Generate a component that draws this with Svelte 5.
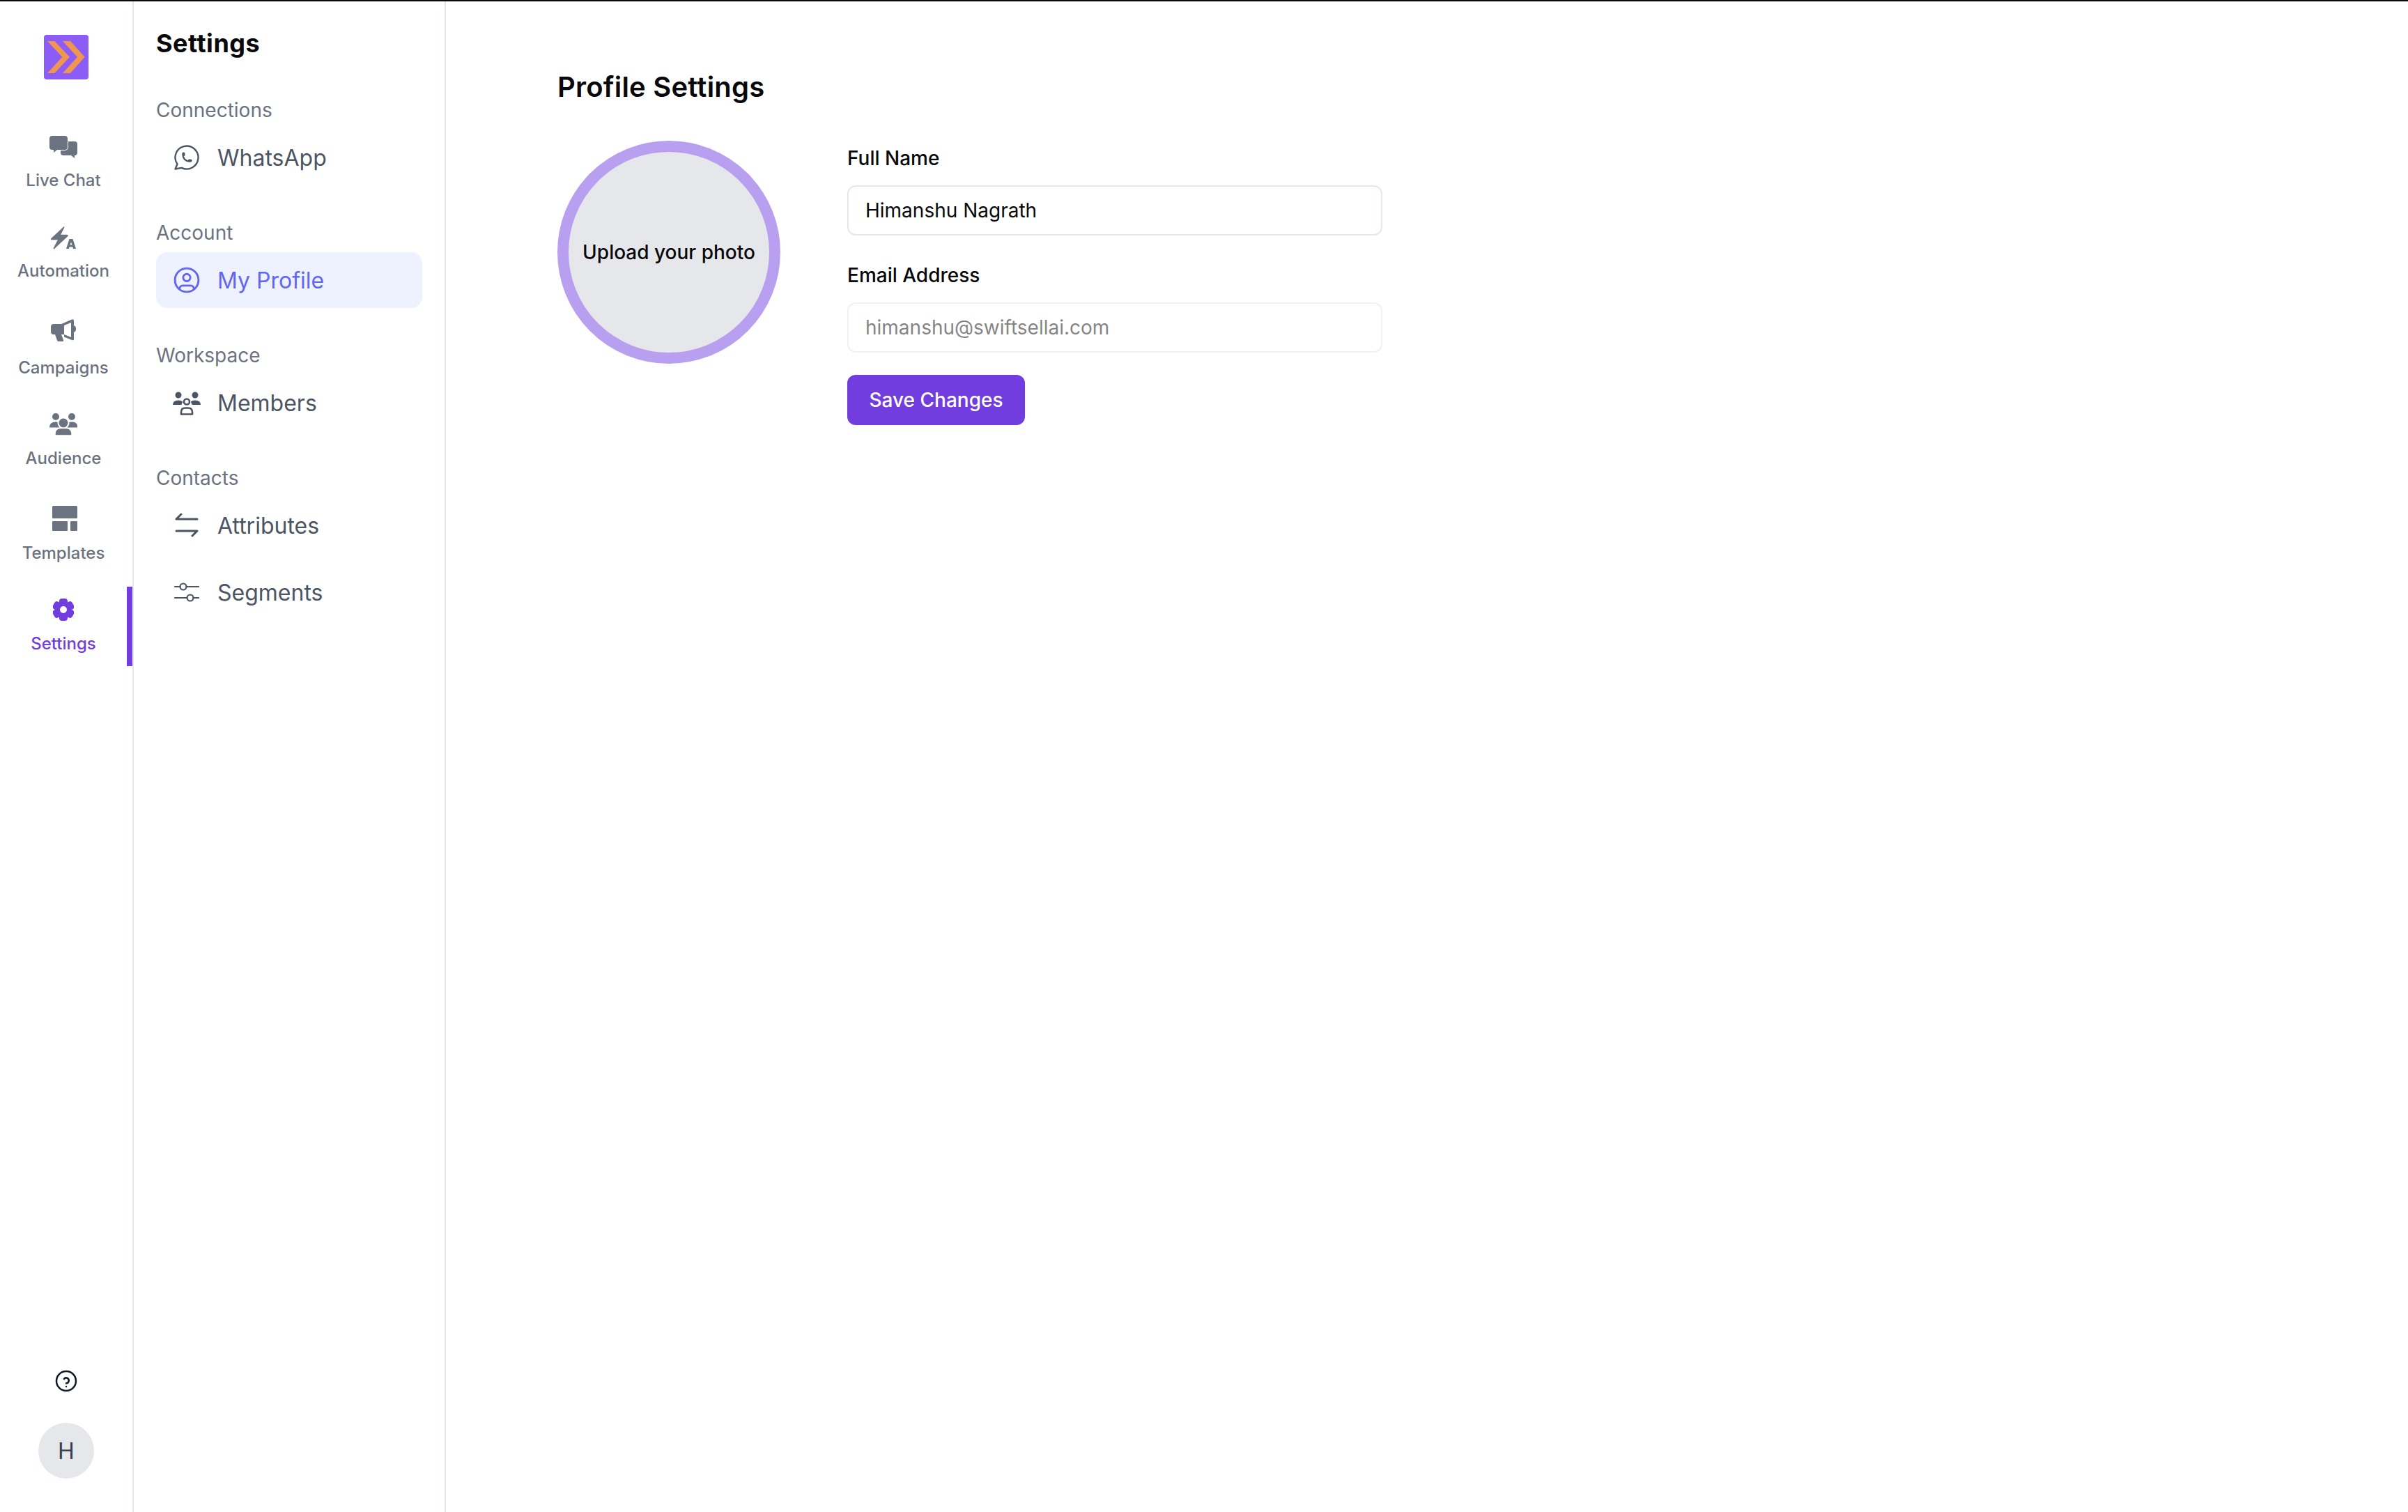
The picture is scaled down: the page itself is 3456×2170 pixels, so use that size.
<script>
  let fullName = $state("Himanshu Nagrath");
  const email = "himanshu@swiftsellai.com";
</script>

<div class="app">
  <!-- icon rail -->
  <aside class="rail">
    <div class="rail-top">
      <svg class="logo" width="64" height="64" viewBox="0 0 64 64">
        <rect width="64" height="64" rx="4" fill="#8b5cf6" />
        <polygon points="5,9 15.3,9 37,31.7 15.3,55 5,55 26.3,31.7" fill="#f09651" />
        <polygon points="27,9 38,9 58.7,31.7 38,55 27,55 48,31.7" fill="#f09651" />
      </svg>

      <nav class="rail-nav">
        <a class="rail-item chat">
          <svg width="40" height="32" viewBox="0 0 40 32">
            <path d="M20 8h16a4 4 0 0 1 4 4v12a4 4 0 0 1-4 4v4l-5-4H20a4 4 0 0 1-4-4V12a4 4 0 0 1 4-4z" fill="currentColor" />
            <path d="M4 0h18a4 4 0 0 1 4 4v12a4 4 0 0 1-4 4H11l-5 4v-4H4a4 4 0 0 1-4-4V4a4 4 0 0 1 4-4z" fill="currentColor" stroke="#fff" stroke-width="2" paint-order="stroke" />
          </svg>
          <span>Live Chat</span>
        </a>
        <a class="rail-item automation">
          <svg width="36" height="33" viewBox="0 0 36 33">
            <path d="M18.7 1 .8 17.8q-.6.8.5.8H11L4.3 31.7 23.7 13.6q.6-1-.6-1H13z" fill="currentColor" stroke="currentColor" stroke-width="1.500" stroke-linejoin="round" />
            <path fill-rule="evenodd" d="M26.5 18h5L36 32h-4l-.7-2.400h-4.800L25.800 32H22zm2.500 4.400-1.500 4.200h3z" fill="currentColor" />
          </svg>
          <span>Automation</span>
        </a>
        <a class="rail-item campaigns">
          <svg width="36" height="32" viewBox="0 0 36 32">
            <path fill-rule="evenodd" d="M4 7h11L30 .6q3-1 3 2V9q3 1 3 5t-3 5v9.500q0 2.500-3 1.600L19 25.500V22l10 4V5l-10 4v13h-4l3 8q.5 2-1.500 2H11q-1.500 0-2-1.500L6 22H4q-4 0-4-4v-7q0-4 4-4z" fill="currentColor" />
          </svg>
          <span>Campaigns</span>
        </a>
        <a class="rail-item">
          <svg width="40" height="32" viewBox="0 0 40 32">
            <circle cx="9" cy="5" r="5" fill="currentColor" />
            <circle cx="32" cy="5" r="5" fill="currentColor" />
            <path d="M0 20.500q0-8 9-8t9 8z" fill="currentColor" />
            <path d="M22 20.500q0-8 9.500-8t8.500 8z" fill="currentColor" />
            <circle cx="20" cy="14" r="7.500" fill="currentColor" stroke="#fff" stroke-width="2" />
            <path d="M8 32v-3q0-6.500 7-7.500h10q7 1 7 7.500v3z" fill="currentColor" stroke="#fff" stroke-width="1.500" />
          </svg>
          <span>Audience</span>
        </a>
        <a class="rail-item templates">
          <svg width="36" height="36" viewBox="0 0 36 36">
            <rect width="36" height="18" rx="1.500" fill="currentColor" />
            <rect y="22" width="22" height="14" rx="1" fill="currentColor" />
            <rect x="26" y="22" width="10" height="14" rx="1" fill="currentColor" />
          </svg>
          <span>Templates</span>
        </a>
        <a class="rail-item active">
          <svg width="30" height="32" viewBox="0 0 30 32">
            <g fill="currentColor">
              <rect x="9" y="0" width="12" height="32" rx="4" />
              <rect x="9" y="0" width="12" height="32" rx="4" transform="rotate(60 15 16)" />
              <rect x="9" y="0" width="12" height="32" rx="4" transform="rotate(120 15 16)" />
              <circle cx="15" cy="16" r="12" />
            </g>
            <circle cx="15" cy="16" r="5" fill="#fff" />
          </svg>
          <span>Settings</span>
        </a>
      </nav>
    </div>

    <div class="rail-bottom">
      <svg width="32" height="32" viewBox="0 0 24 24" fill="none" stroke="#111827" stroke-width="1.900" stroke-linecap="round" stroke-linejoin="round">
        <circle cx="12" cy="12" r="10.500" />
        <path d="M12 18v.01" />
        <path d="M12 14.500a3 3 0 0 0 1.300-5.600 3 3 0 0 0-3.600.800" />
      </svg>
      <div class="avatar">H</div>
    </div>
  </aside>

  <!-- settings menu -->
  <aside class="menu">
    <h2>Settings</h2>

    <section>
      <h3>Connections</h3>
      <a class="menu-item">
        <svg class="menu-icon" viewBox="0 0 24 24" stroke-width="1.300">
          <path d="M3 21l1.650-3.800a9 9 0 1 1 3.400 2.900l-5.050.9" />
          <path d="M9 10a.5.5 0 0 0 1 0V9a.5.5 0 0 0-1 0v1a5 5 0 0 0 5 5h1a.5.5 0 0 0 0-1h-1a.5.5 0 0 0 0 1" />
        </svg>
        WhatsApp
      </a>
    </section>

    <section>
      <h3>Account</h3>
      <a class="menu-item selected">
        <svg class="menu-icon" viewBox="0 0 24 24" stroke-width="1.600">
          <circle cx="12" cy="12" r="9.200" />
          <circle cx="12" cy="10" r="2.800" />
          <path d="M6.400 19v-.5a2.500 2.500 0 0 1 2.500-2.200h6.200a2.500 2.500 0 0 1 2.500 2.200v.5" />
        </svg>
        My Profile
      </a>
    </section>

    <section>
      <h3>Workspace</h3>
      <a class="menu-item">
        <svg class="menu-icon" viewBox="0 0 44 44">
          <g fill="currentColor" stroke="none">
            <circle cx="10" cy="11" r="4.500" />
            <circle cx="34" cy="11" r="4.500" />
            <path d="M2 25q0-6.500 8-6.500 4 0 6 2v1q-1.500 1.500-1.500 3.500z" />
            <path d="M42 25q0-6.500-8-6.500-4 0-6 2v1q1.500 1.500 1.500 3.500z" />
          </g>
          <g stroke-width="2.600">
            <circle cx="22" cy="20.500" r="4" />
            <path d="M14 38.500v-3q0-6 6-6h4q6 0 6 6v3z" />
          </g>
        </svg>
        Members
      </a>
    </section>

    <section>
      <h3>Contacts</h3>
      <a class="menu-item">
        <svg class="menu-icon" viewBox="0 0 44 44" stroke-width="3">
          <path d="M7 13h30M7 13l7-7" />
          <path d="M7 30h30M37 30l-7 7" />
        </svg>
        Attributes
      </a>
      <a class="menu-item">
        <svg class="menu-icon" viewBox="0 0 44 44" stroke-width="2.200">
          <circle cx="17" cy="14" r="4.500" />
          <path d="M5 14h7.500M21.500 14H39" />
          <circle cx="27" cy="30" r="4.500" />
          <path d="M5 30h17.500M31.500 30H39" />
        </svg>
        Segments
      </a>
    </section>
  </aside>

  <!-- profile form -->
  <main class="content">
    <h1>Profile Settings</h1>
    <div class="profile">
      <div class="photo">Upload your photo</div>
      <form class="form" onsubmit={(e) => e.preventDefault()}>
        <label for="full-name">Full Name</label>
        <input id="full-name" type="text" bind:value={fullName} />
        <label class="email-label" for="email">Email Address</label>
        <input id="email" type="text" value={email} disabled />
        <button type="submit">Save Changes</button>
      </form>
    </div>
  </main>
</div>

<style>
  :global(body) {
    margin: 0;
    background: #fff;
  }
  .app {
    display: flex;
    height: 2170px;
    box-sizing: border-box;
    border-top: 2px solid #09090b;
    font-family: Inter, "Liberation Sans", sans-serif;
    color: #09090b;
  }
  .rail {
    flex: none;
    width: 192px;
    box-sizing: border-box;
    border-right: 2px solid #e5e7eb;
    padding-top: 48px;
    display: flex;
    flex-direction: column;
    justify-content: space-between;
  }
  .logo {
    display: block;
    margin: 0 0 64px 63px;
  }
  .rail-nav {
    display: flex;
    flex-direction: column;
    gap: 16px;
  }
  .rail-item {
    display: flex;
    flex-direction: column;
    align-items: center;
    gap: 17px;
    padding: 17px 0 16px;
    border-right: 8px solid transparent;
    color: #6b7280;
    font-size: 24px;
    line-height: 32px;
    font-weight: 500;
  }
  .rail-item svg {
    display: block;
  }
  .rail-item.chat {
    gap: 16px;
    padding-bottom: 17px;
  }
  .rail-item.automation {
    gap: 15px;
  }
  .rail-item.campaigns {
    margin-top: 4px;
    gap: 22px;
  }
  .rail-item.templates {
    margin-top: 3px;
    gap: 16px;
  }
  .rail-item.templates svg {
    margin-left: 4px;
  }
  .rail-item.active {
    color: #723ddf;
    border-right-color: #723ddf;
  }
  .rail-bottom {
    display: flex;
    flex-direction: column;
    align-items: center;
    gap: 44px;
    padding-bottom: 48px;
  }
  .rail-bottom svg {
    display: block;
  }
  .avatar {
    width: 80px;
    height: 80px;
    border-radius: 50%;
    background: #e5e7eb;
    color: #374151;
    font-size: 32px;
    display: flex;
    align-items: center;
    justify-content: center;
  }
  .menu {
    flex: none;
    width: 448px;
    box-sizing: border-box;
    border-right: 2px solid #e5e7eb;
    padding: 32px 32px 0;
  }
  h2 {
    margin: 0 0 48px;
    font-size: 36px;
    line-height: 56px;
    font-weight: 700;
    letter-spacing: 0.5px;
  }
  section {
    margin-bottom: 48px;
  }
  h3 {
    margin: 0 0 8px;
    font-size: 28px;
    line-height: 40px;
    font-weight: 400;
    color: #6b7280;
  }
  .menu-item {
    display: flex;
    align-items: center;
    gap: 22px;
    height: 80px;
    padding: 0 22px;
    border-radius: 16px;
    font-size: 32px;
    color: #4b5563;
  }
  .menu-item + .menu-item {
    margin-top: 16px;
  }
  .menu-item.selected {
    background: #eef2ff;
    color: #6366f1;
  }
  .menu-icon {
    flex: none;
    width: 44px;
    height: 44px;
    fill: none;
    stroke: currentColor;
    stroke-linecap: round;
    stroke-linejoin: round;
  }
  .content {
    flex: 1;
    padding: 95px 0 0 160px;
  }
  h1 {
    margin: 0 0 49px;
    font-size: 40px;
    line-height: 56px;
    font-weight: 600;
    letter-spacing: 0.2px;
  }
  .profile {
    display: flex;
    gap: 96px;
    align-items: flex-start;
  }
  .photo {
    flex: none;
    width: 320px;
    height: 320px;
    box-sizing: border-box;
    border: 16px solid #b99ff0;
    border-radius: 50%;
    background: #e5e7eb;
    display: flex;
    align-items: center;
    justify-content: center;
    font-size: 28px;
    font-weight: 500;
    white-space: nowrap;
  }
  .form {
    width: 768px;
    padding-top: 5px;
    display: flex;
    flex-direction: column;
    align-items: flex-start;
  }
  label {
    font-size: 28px;
    line-height: 40px;
    font-weight: 500;
    margin-bottom: 19px;
  }
  .email-label {
    margin-top: 37px;
  }
  input {
    width: 100%;
    height: 72px;
    box-sizing: border-box;
    padding: 0 24px;
    border: 2px solid #e5e7eb;
    border-radius: 12px;
    background: #fff;
    color: #09090b;
    font: 400 28px Inter, "Liberation Sans", sans-serif;
    outline: none;
  }
  input:disabled {
    opacity: 0.5;
  }
  button {
    margin-top: 32px;
    width: 255px;
    height: 72px;
    border: none;
    border-radius: 12px;
    background: #723ddf;
    color: #fff;
    font: 500 28px Inter, "Liberation Sans", sans-serif;
  }
</style>
